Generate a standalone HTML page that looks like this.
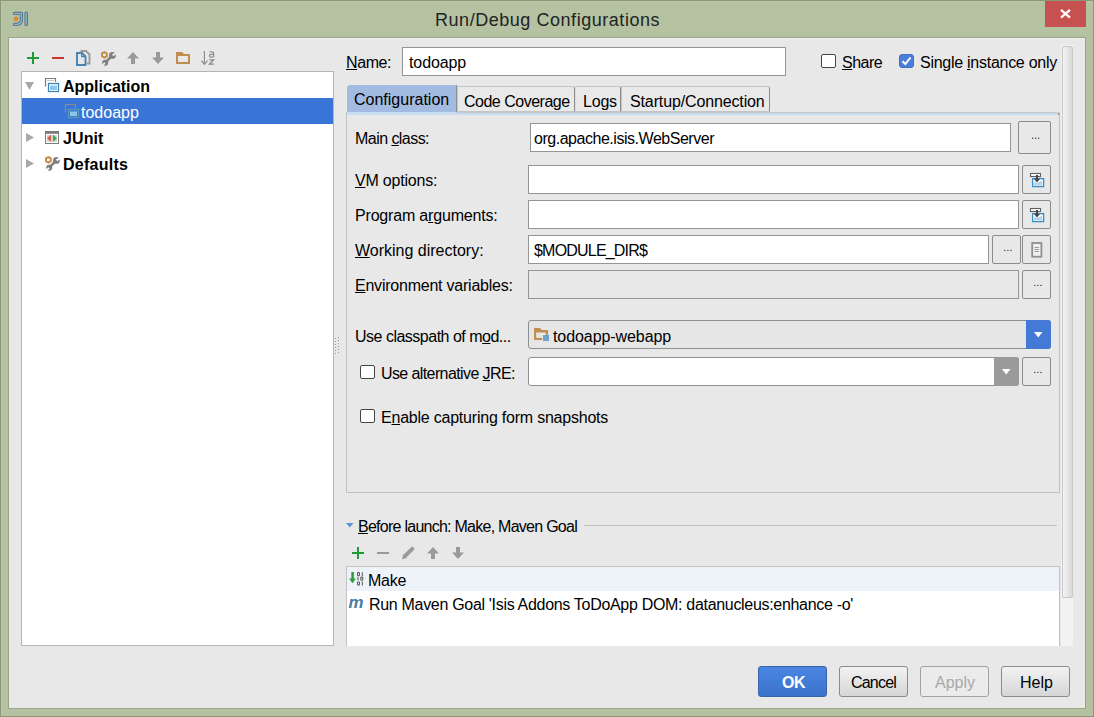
<!DOCTYPE html>
<html><head><meta charset="utf-8">
<style>
*{box-sizing:border-box;margin:0;padding:0}
html,body{width:1094px;height:717px;overflow:hidden}
body{background:#b4c2a2;font-family:"Liberation Sans",sans-serif;font-size:16px;color:#000;position:relative}
.a{position:absolute}
.t{position:absolute;white-space:pre;line-height:16px;font-size:16px}
.b{font-weight:bold}
u{text-decoration:underline;text-decoration-thickness:1px;text-underline-offset:0.5px}
.fld{position:absolute;background:#fff;border:1px solid #959595}
.btn{position:absolute;border:1.5px solid #8c8c8c;border-radius:2px;background:#e8e8e8}
.dots{position:absolute;left:0;right:0;text-align:center;font-size:14px;line-height:14px;top:8px;color:#333;letter-spacing:0px}
.cb{position:absolute;width:15px;height:14px;border:1.5px solid #464646;border-radius:2px;background:#fff}
.pbtn{position:absolute;height:31px;border:1px solid #8b8b8b;border-radius:3px;background:linear-gradient(#f2f2f2,#d6d6d6);text-align:center;line-height:29px}
</style></head><body>
<!-- outer border -->
<div class="a" style="left:0;top:0;width:1094px;height:717px;border:1px solid #899678"></div>
<div class="a" style="left:1px;top:1px;width:1092px;height:715px;border:1px solid #b9c7a6;border-right:0;border-bottom:0"></div>
<!-- app icon -->
<svg class="a" style="left:12px;top:10px" width="18" height="18" viewBox="12 10 18 18">
  <path d="M14.6 13.4 H21.4 V19.8 Q21.4 24.4 16.2 24.4 H14.6" fill="none" stroke="#4f6f87" stroke-width="3.3" stroke-linecap="round" stroke-linejoin="round"/>
  <path d="M14.6 13.4 H21.4 V19.8 Q21.4 24.4 16.2 24.4 H14.6" fill="none" stroke="#92b2c6" stroke-width="1.5" stroke-linecap="round" stroke-linejoin="round"/>
  <path d="M26.2 13.3 V24.5" stroke="#4f6f87" stroke-width="3.4" stroke-linecap="round"/>
  <path d="M26.2 13.3 V24.5" stroke="#92b2c6" stroke-width="1.5" stroke-linecap="round"/>
  <circle cx="16" cy="18.9" r="1.9" fill="#ec8a1c" stroke="#c66a12" stroke-width="0.5"/>
</svg>
<!-- title -->
<div class="t" style="left:435px;top:11px;font-size:18px;line-height:18px;color:#222;letter-spacing:0.54px">Run/Debug Configurations</div>
<!-- close -->
<div class="a" style="left:1045px;top:1px;width:41px;height:26px;background:#c75050"></div>
<svg class="a" style="left:1059px;top:8px" width="13" height="11" viewBox="0 0 13 11"><path d="M2 1.8 L11 9.6 M11 1.8 L2 9.6" stroke="#fff" stroke-width="2.2"/></svg>

<!-- content -->
<div class="a" style="left:8px;top:37px;width:1078px;height:672px;border:1px solid #98a686;background:#e8e8e8"></div>
<div class="a" style="left:9px;top:38px;width:1076px;height:1px;background:#f0f0f0"></div>


<!-- LEFT TOOLBAR -->
<svg class="a" style="left:22px;top:46px" width="200" height="24" viewBox="22 46 200 24">
  <path d="M33 52 V64 M27 58 H39" stroke="#1f9a36" stroke-width="2"/>
  <path d="M52 58 H64" stroke="#c9372c" stroke-width="2"/>
  <!-- copy -->
  <path d="M80.5 51 H86 L89.5 54.5 V63.5 H87" fill="none" stroke="#999" stroke-width="1.9"/>
  <path d="M77 53 H82 L85.5 56.5 V65 H77 Z" fill="#e8e8e8" stroke="#4583b3" stroke-width="1.9"/>
  <path d="M81.7 53 V56.6 H85.5" fill="none" stroke="#4583b3" stroke-width="1.3"/>
  <!-- wrench -->
  <g transform="translate(100 50)" style="color:#e8e8e8">
  <circle cx="12.4" cy="5.4" r="3.4" fill="#7f7f7f"/>
  <circle cx="5.2" cy="12.7" r="3" fill="#7f7f7f"/>
  <path d="M12.4 5.4 L5.2 12.7" stroke="#7f7f7f" stroke-width="2.6"/>
  <path d="M12.6 5.4 L17 2.4" stroke="currentColor" stroke-width="2.2"/>
  <path d="M5 12.9 L1.5 16.4" stroke="currentColor" stroke-width="2"/>
  <path d="M4.4 2 L6.8 3.4 V6.2 L4.4 7.6 L2 6.2 V3.4 Z" fill="none" stroke="#c48a3c" stroke-width="1.9"/>
  </g>
  <!-- up -->
  <path d="M133 52 L139 58.5 H135 V64 H131 V58.5 H127 Z" fill="#9a9a9a"/>
  <!-- down -->
  <path d="M158 64 L164 57.5 H160 V52 H156 V57.5 H152 Z" fill="#9a9a9a"/>
  <!-- folder -->
  <g fill="#bf8f52"><path d="M176 52 H182 L184 54 H190 V56 H176 Z"/><rect x="176" y="52" width="2" height="12"/><rect x="176" y="62" width="14" height="2"/><rect x="188" y="54" width="2" height="10"/></g>
  <!-- sort -->
  <path d="M204.4 51 V64.3 M201.3 60.6 L204.4 64.4 L207.5 60.6" fill="none" stroke="#8f8f8f" stroke-width="1.2"/>
  <path d="M209.6 51.9 H212.3 Q213.6 51.9 213.6 53.3 V57 M213.6 54.4 H211 Q209.4 54.4 209.4 55.7 Q209.4 57 211 57 H213.6" fill="none" stroke="#8f8f8f" stroke-width="1.25"/>
  <path d="M209.3 59.8 H213.7 L209.4 64.2 H214" fill="none" stroke="#8f8f8f" stroke-width="1.25"/>
</svg>

<!-- TREE -->
<div class="a" style="left:21px;top:71px;width:313px;height:575px;border:1px solid #b5b5b5;background:#fff"></div>
<div class="a" style="left:22px;top:98px;width:311px;height:26px;background:#3875d7"></div>
<!-- triangles -->
<svg class="a" style="left:22px;top:72px" width="16" height="100" viewBox="22 72 16 100">
  <path d="M25 82 H34 L29.5 90 Z" fill="#a8a8a8"/>
  <path d="M26 133 L34 137.5 L26 142 Z" fill="#a8a8a8"/>
  <path d="M26 159 L34 163.5 L26 168 Z" fill="#a8a8a8"/>
</svg>
<!-- app icons -->
<svg class="a" style="left:44px;top:76px" width="40" height="44" viewBox="44 76 40 44">
  <path d="M45.5 86.5 V78.5 H55.5 V82" fill="none" stroke="#7b7b7b" stroke-width="1.2"/>
  <path d="M47 80.5 H54" stroke="#c8c8c8" stroke-width="1"/>
  <rect x="48.5" y="83.5" width="10" height="8" fill="#fff" stroke="#3e86b5" stroke-width="1.3"/>
  <rect x="50" y="85.5" width="7" height="4.5" fill="#8cc8ee"/>
  <path d="M65.5 112.5 V104.5 H75.5 V108" fill="none" stroke="#8b8b8b" stroke-width="1.2"/>
  <rect x="68.5" y="109.5" width="10" height="8" fill="#3875d7" stroke="#5a9ab5" stroke-width="1.3"/>
  <rect x="70" y="111.5" width="7" height="4.5" fill="#8cc8ee"/>
</svg>
<svg class="a" style="left:44px;top:128px" width="20" height="46" viewBox="44 128 20 46">
  <rect x="45.5" y="131.5" width="13" height="12" fill="#fff" stroke="#7a7a7a" stroke-width="1"/>
  <rect x="45" y="131" width="14" height="2.8" fill="#7a7a7a"/>
  <rect x="47" y="135" width="10" height="7" fill="#d4d4d4"/>
  <path d="M51 134.8 V141.8 L47 138.3 Z" fill="#d9594a"/>
  <path d="M53 134.8 V141.8 L57 138.3 Z" fill="#3cae4a"/>
  <!-- defaults wrench -->
  <g transform="translate(44 155)" style="color:#fff">
  <circle cx="12.4" cy="5.4" r="3.4" fill="#7f7f7f"/>
  <circle cx="5.2" cy="12.7" r="3" fill="#7f7f7f"/>
  <path d="M12.4 5.4 L5.2 12.7" stroke="#7f7f7f" stroke-width="2.6"/>
  <path d="M12.6 5.4 L17 2.4" stroke="currentColor" stroke-width="2.2"/>
  <path d="M5 12.9 L1.5 16.4" stroke="currentColor" stroke-width="2"/>
  <path d="M4.4 2 L6.8 3.4 V6.2 L4.4 7.6 L2 6.2 V3.4 Z" fill="none" stroke="#c48a3c" stroke-width="1.9"/>
  </g>
</svg>
<div class="t b" style="left:63px;top:79px">Application</div>
<div class="t" style="left:81px;top:105px;color:#fff">todoapp</div>
<div class="t b" style="left:63px;top:131px;letter-spacing:0.1px">JUnit</div>
<div class="t b" style="left:63px;top:157px;letter-spacing:0.27px">Defaults</div>

<!-- splitter dots -->
<svg class="a" style="left:334px;top:337px" width="6" height="17" viewBox="0 0 6 17">
  <g fill="#9a9a9a"><rect x="1" y="1" width="1" height="1"/><rect x="4" y="0" width="1" height="1"/><rect x="1" y="4" width="1" height="1"/><rect x="4" y="3" width="1" height="1"/><rect x="1" y="7" width="1" height="1"/><rect x="4" y="6" width="1" height="1"/><rect x="1" y="10" width="1" height="1"/><rect x="4" y="9" width="1" height="1"/><rect x="1" y="13" width="1" height="1"/><rect x="4" y="12" width="1" height="1"/><rect x="1" y="16" width="1" height="1"/><rect x="4" y="15" width="1" height="1"/></g>
</svg>


<!-- RIGHT TOP -->
<div class="t" style="left:346px;top:55px;letter-spacing:-0.4px"><u>N</u>ame:</div>
<div class="fld" style="left:402px;top:47px;width:384px;height:29px"></div>
<div class="t" style="left:409px;top:55px;letter-spacing:-0.1px">todoapp</div>
<div class="cb" style="left:821px;top:54px"></div>
<div class="t" style="left:842px;top:55px;letter-spacing:-0.5px"><u>S</u>hare</div>
<div class="a" style="left:899px;top:54px;width:15px;height:14px;border-radius:3px;background:#4a7fd9;border:1px solid #3f6fc4"></div>
<svg class="a" style="left:899px;top:54px" width="15" height="14" viewBox="0 0 15 14"><path d="M3.5 7.2 L6.3 10 L11.5 3.5" fill="none" stroke="#fff" stroke-width="2"/></svg>
<div class="t" style="left:920px;top:55px;letter-spacing:-0.27px">Single <u>i</u>nstance only</div>

<!-- scrollbar -->
<div class="a" style="left:1061px;top:45px;width:12px;height:601px;background:#f2f2f2"></div>
<div class="a" style="left:1062px;top:46px;width:11px;height:552px;border:1px solid #c8c8c8;border-radius:2px;background:linear-gradient(90deg,#f4f4f4,#d8d8d8)"></div>

<!-- TABS -->
<div class="a" style="left:346px;top:112px;width:714px;height:381px;border:1px solid #c2c2c2;border-top:0"></div>
<div class="a" style="left:347px;top:112px;width:711px;height:3px;background:#c8dcf2"></div>
<div class="a" style="left:457px;top:112px;width:601px;height:1px;background:#c6c6c6"></div>
<div class="a" style="left:1058px;top:113px;width:1px;height:2px;background:#8a8a8a"></div>
<div class="a" style="left:347px;top:85px;width:110px;height:27px;background:#a3bbe1;border-right:1px solid #8a8f98;border-top-left-radius:3px"></div>
<div class="a" style="left:457px;top:86px;width:118px;height:26px;border:1px solid #c4c4c4;border-right-color:#8c8c8c;border-top-right-radius:2px;background:#e9e9e9"></div>
<div class="a" style="left:575px;top:86px;width:46px;height:26px;border:1px solid #c4c4c4;border-left-color:#dcdcdc;border-right-color:#8c8c8c;border-top-right-radius:2px;background:#e9e9e9"></div>
<div class="a" style="left:621px;top:86px;width:149px;height:26px;border:1px solid #c4c4c4;border-right:1px solid #8c8c8c;border-top-right-radius:2px;background:#e9e9e9"></div>
<div class="t" style="left:354px;top:92px">Configuration</div>
<div class="t" style="left:464px;top:94px;letter-spacing:-0.5px">Code Coverage</div>
<div class="t" style="left:583px;top:94px;letter-spacing:-0.2px">Logs</div>
<div class="t" style="left:630px;top:94px;letter-spacing:-0.13px">Startup/Connection</div>

<!-- FORM -->
<div class="t" style="left:355px;top:131px;letter-spacing:-0.55px">Main <u>c</u>lass:</div>
<div class="fld" style="left:530px;top:123px;width:481px;height:29px"></div>
<div class="t" style="left:534px;top:131px;letter-spacing:-0.47px">org.apache.isis.WebServer</div>
<div class="btn" style="left:1018px;top:121px;width:33px;height:33px"><svg class="a" style="left:-1.5px;top:-1.5px" width="33" height="33" viewBox="0 0 33 33"><g fill="#3a3a3a"><circle cx="14.6" cy="17.3" r="0.72"/><circle cx="17.6" cy="17.3" r="0.72"/><circle cx="20.6" cy="17.3" r="0.72"/></g></svg></div>

<div class="t" style="left:355px;top:173px;letter-spacing:-0.2px"><u>V</u>M options:</div>
<div class="fld" style="left:528px;top:165px;width:491px;height:29px"></div>
<div class="btn" style="left:1022px;top:165px;width:29px;height:29px"></div>

<div class="t" style="left:355px;top:208px;letter-spacing:-0.18px">Program a<u>r</u>guments:</div>
<div class="fld" style="left:528px;top:200px;width:491px;height:29px"></div>
<div class="btn" style="left:1022px;top:200px;width:29px;height:29px"></div>

<div class="t" style="left:355px;top:243px"><u>W</u>orking directory:</div>
<div class="fld" style="left:528px;top:235px;width:461px;height:29px"></div>
<div class="t" style="left:534px;top:243px;letter-spacing:-0.8px">$MODULE_DIR$</div>
<div class="btn" style="left:992px;top:235px;width:29px;height:29px"><svg class="a" style="left:-1.5px;top:-1.5px" width="29" height="29" viewBox="0 0 29 29"><g fill="#3a3a3a"><circle cx="12.8" cy="15.4" r="0.72"/><circle cx="15.9" cy="15.4" r="0.72"/><circle cx="19" cy="15.4" r="0.72"/></g></svg></div>
<div class="btn" style="left:1022px;top:235px;width:29px;height:29px"></div>

<div class="t" style="left:355px;top:278px;letter-spacing:-0.23px"><u>E</u>nvironment variables:</div>
<div class="fld" style="left:528px;top:270px;width:491px;height:29px;background:#e8e8e8"></div>
<div class="btn" style="left:1022px;top:270px;width:29px;height:29px"><svg class="a" style="left:-1.5px;top:-1.5px" width="29" height="29" viewBox="0 0 29 29"><g fill="#3a3a3a"><circle cx="12.8" cy="15.4" r="0.72"/><circle cx="15.9" cy="15.4" r="0.72"/><circle cx="19" cy="15.4" r="0.72"/></g></svg></div>

<!-- icons in VM / program / working dir buttons -->
<svg class="a" style="left:1022px;top:165px" width="29" height="29" viewBox="0 0 29 29">
  <rect x="8.5" y="8.5" width="10" height="3" fill="#fff" stroke="#5e5e5e" stroke-width="1.1"/>
  <rect x="10.6" y="13.6" width="11" height="8" fill="#fff" stroke="#3b8dc8" stroke-width="1.3"/>
  <path d="M12 16.5 Q14 18.5 16 17.5 Q18.5 16 20.3 16 V20.5 H12 Z" fill="#b3d2e8"/>
  <rect x="19.5" y="13" width="2" height="1.3" fill="#3b8dc8"/>
  <path d="M15 10 V15" stroke="#454545" stroke-width="2"/>
  <path d="M11.8 13.8 H18.2 L15 17.6 Z" fill="#454545"/>
</svg>
<svg class="a" style="left:1022px;top:200px" width="29" height="29" viewBox="0 0 29 29">
  <rect x="8.5" y="8.5" width="10" height="3" fill="#fff" stroke="#5e5e5e" stroke-width="1.1"/>
  <rect x="10.6" y="13.6" width="11" height="8" fill="#fff" stroke="#3b8dc8" stroke-width="1.3"/>
  <path d="M12 16.5 Q14 18.5 16 17.5 Q18.5 16 20.3 16 V20.5 H12 Z" fill="#b3d2e8"/>
  <rect x="19.5" y="13" width="2" height="1.3" fill="#3b8dc8"/>
  <path d="M15 10 V15" stroke="#454545" stroke-width="2"/>
  <path d="M11.8 13.8 H18.2 L15 17.6 Z" fill="#454545"/>
</svg>
<svg class="a" style="left:1022px;top:235px" width="29" height="29" viewBox="0 0 29 29">
  <rect x="10.2" y="8" width="9.2" height="13.7" fill="#f0f0f0" stroke="#8f8f8f" stroke-width="1.8"/>
  <path d="M12.5 12.5 H17 M12.5 14.5 H17 M12.5 16.5 H17" stroke="#8f8f8f" stroke-width="0.9"/>
</svg>

<div class="t" style="left:355px;top:329px;letter-spacing:-0.5px">Use classpath of m<u>o</u>d...</div>
<div class="a" style="left:528px;top:320px;width:523px;height:29px;border:1px solid #8f8f8f;border-radius:3px;background:#e6e6e6"></div>
<div class="a" style="left:1026px;top:320px;width:25px;height:29px;border-radius:0 3px 3px 0;background:#4479d6"></div>
<svg class="a" style="left:1026px;top:320px" width="25" height="29" viewBox="0 0 25 29"><path d="M8 12 H16.5 L12.25 17.5 Z" fill="#fff"/></svg>
<svg class="a" style="left:533px;top:327px" width="17" height="15" viewBox="0 0 17 15">
  <g fill="#bf8f52"><path d="M1 1 H6.8 L8.8 3 H15 V5.4 H1 Z"/><rect x="1" y="1" width="2.2" height="12"/><rect x="1" y="10.9" width="8" height="2.1"/><rect x="12.8" y="3" width="2.2" height="5"/></g>
  <rect x="10" y="8" width="6" height="6" fill="#6da5cb"/>
</svg>
<div class="t" style="left:553px;top:329px;letter-spacing:-0.08px">todoapp-webapp</div>

<div class="cb" style="left:360px;top:365px"></div>
<div class="t" style="left:381px;top:366px;letter-spacing:-0.6px">Use alternative <u>J</u>RE:</div>
<div class="a" style="left:528px;top:357px;width:491px;height:29px;border:1px solid #8f8f8f;border-radius:3px;background:#fff"></div>
<div class="a" style="left:994px;top:357px;width:25px;height:29px;border-radius:0 3px 3px 0;background:#9a9a9a"></div>
<svg class="a" style="left:994px;top:357px" width="25" height="29" viewBox="0 0 25 29"><path d="M8 12 H16.5 L12.25 17.5 Z" fill="#fff"/></svg>
<div class="btn" style="left:1022px;top:357px;width:29px;height:29px"><svg class="a" style="left:-1.5px;top:-1.5px" width="29" height="29" viewBox="0 0 29 29"><g fill="#3a3a3a"><circle cx="12.8" cy="15.4" r="0.72"/><circle cx="15.9" cy="15.4" r="0.72"/><circle cx="19" cy="15.4" r="0.72"/></g></svg></div>

<div class="cb" style="left:360px;top:409px"></div>
<div class="t" style="left:381px;top:410px;letter-spacing:-0.22px">E<u>n</u>able capturing form snapshots</div>

<!-- BEFORE LAUNCH -->
<svg class="a" style="left:346px;top:523px" width="8" height="5" viewBox="0 0 8 5"><path d="M0 0 H7.5 L3.75 4.5 Z" fill="#5a9ad2"/></svg>
<div class="t" style="left:358px;top:519px;letter-spacing:-0.74px"><u>B</u>efore launch: Make, Maven Goal</div>
<div class="a" style="left:584px;top:525px;width:473px;height:1px;background:#c4c4c4"></div>
<svg class="a" style="left:346px;top:544px" width="124" height="18" viewBox="346 544 124 18">
  <path d="M358 547 V559 M352 553 H364" stroke="#1f9a36" stroke-width="2"/>
  <path d="M377 553 H389" stroke="#9a9a9a" stroke-width="2"/>
  <path d="M412.2 548.9 L405.2 555.9" stroke="#9a9a9a" stroke-width="4" stroke-linecap="round"/><path d="M403.2 554.2 L406.9 557.9 L402 559.2 Z" fill="#9a9a9a"/>
  <path d="M433 547 L439 553.5 H435 V559 H431 V553.5 H427 Z" fill="#9a9a9a"/>
  <path d="M458 559 L464 552.5 H460 V547 H456 V552.5 H452 Z" fill="#9a9a9a"/>
</svg>
<div class="a" style="left:346px;top:566px;width:714px;height:80px;border:1px solid #c2c2c2;border-bottom:0;background:#fff"></div>
<div class="a" style="left:347px;top:567px;width:712px;height:24px;background:#eef3fa"></div>
<svg class="a" style="left:346px;top:568px" width="24" height="20" viewBox="346 568 24 20">
  <path d="M352.6 572 V579.5" stroke="#2c9f40" stroke-width="2.6"/>
  <path d="M349 578.6 H356 L352.5 583.2 Z" fill="#2c9f40"/>
  <g fill="none" stroke="#5a5a5a" stroke-width="1.05">
    <rect x="357.5" y="572.6" width="2" height="3.2" rx="0.8"/><path d="M362.3 572.3 V576"/>
    <path d="M358 576.8 V580.6"/><rect x="360.8" y="577.1" width="2" height="3.2" rx="0.8"/>
    <rect x="357.5" y="581.9" width="2" height="3.2" rx="0.8"/><path d="M362.3 581.6 V585.4"/>
  </g>
</svg>
<div class="t" style="left:368px;top:573px;letter-spacing:-0.25px">Make</div>
<svg class="a" style="left:346px;top:596px" width="20" height="14" viewBox="0 0 20 14">
  <text x="2.6" y="11.8" font-family="Liberation Sans" font-size="16.5" font-weight="bold" font-style="italic" fill="#4a7aa2" textLength="15" lengthAdjust="spacingAndGlyphs">m</text>
</svg>
<div class="t" style="left:369px;top:597px;letter-spacing:-0.31px">Run Maven Goal 'Isis Addons ToDoApp DOM: datanucleus:enhance -o'</div>

<!-- BUTTONS -->
<div class="pbtn" style="left:758px;top:666px;width:69px;border-color:#3a64a8;background:linear-gradient(#4a86e2,#3c72cc)"></div>
<div class="t b" style="left:782px;top:675px;color:#fff;letter-spacing:-0.5px">OK</div>
<div class="pbtn" style="left:839px;top:666px;width:69px"></div>
<div class="t" style="left:851px;top:675px;letter-spacing:-0.8px">Cancel</div>
<div class="pbtn" style="left:920px;top:666px;width:69px;border-color:#a2a2a2;background:#ebebeb"></div>
<div class="t" style="left:935px;top:675px;color:#a8a8a8">Apply</div>
<div class="pbtn" style="left:1001px;top:666px;width:69px"></div>
<div class="t" style="left:1020px;top:675px">Help</div>

</body></html>
